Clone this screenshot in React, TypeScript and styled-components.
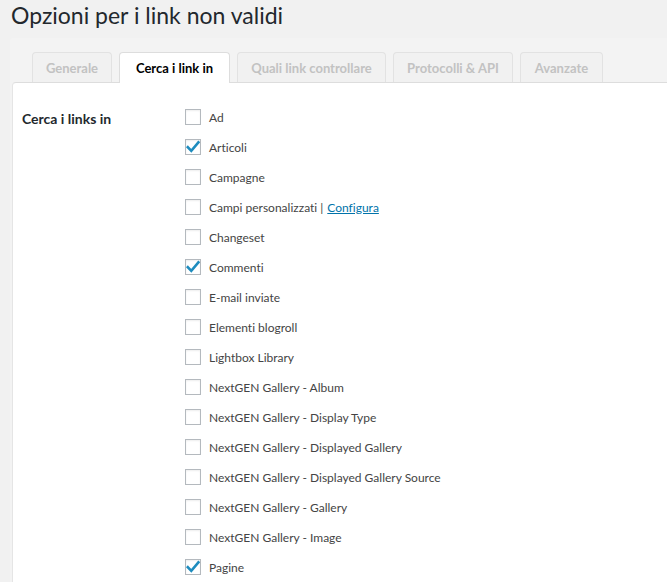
import React from "react";
import styled, { createGlobalStyle } from "styled-components";

const Global = createGlobalStyle`
  html, body { margin: 0; padding: 0; background: #f1f1f1; }
  body {
    font-family: "Lato", "Open Sans", sans-serif;
    color: #444;
    font-size: 13px;
    font-variant-ligatures: none;
  }
  * { box-sizing: border-box; }
`;

const Page = styled.div`
  padding-left: 10px;
  height: 582px;
  overflow: hidden;
`;

const Title = styled.h1`
  margin: 0;
  font-size: 23px;
  line-height: 30px;
  font-weight: 400;
  color: #23282d;
  padding: 0 0 0 1px;
`;

const TabArea = styled.div`
  margin-top: 8px;
  background: #f3f3f3;
  border-radius: 3px 0 0 0;
`;

const TabBar = styled.div`
  display: flex;
  gap: 7px;
  padding: 14px 0 0 22px;
  align-items: flex-end;
`;

const Tab = styled.div<{ $active?: boolean; $w: number }>`
  width: ${(p) => p.$w}px;
  height: ${(p) => (p.$active ? 31 : 30)}px;
  display: flex;
  align-items: center;
  justify-content: center;
  font-size: 13px;
  font-weight: 700;
  border: 1px solid ${(p) => (p.$active ? "#ddd" : "#e2e2e2")};
  border-bottom: none;
  border-radius: 4px 4px 0 0;
  background: ${(p) => (p.$active ? "#fff" : "#f1f1f1")};
  color: ${(p) => (p.$active ? "#000" : "#c2c2c2")};
  margin-bottom: ${(p) => (p.$active ? -1 : 0)}px;
  position: relative;
  z-index: ${(p) => (p.$active ? 1 : 0)};
  white-space: nowrap;
`;

const Panel = styled.div`
  margin-left: 2px;
  background: #fff;
  border-top: 1px solid #ddd;
  border-left: 1px solid #e5e5e5;
  border-radius: 4px 0 0 0;
  padding: 19px 0 20px 9px;
  display: grid;
  grid-template-columns: 163px 1fr;
`;

const Label = styled.div`
  font-size: 14px;
  font-weight: 700;
  color: #23282d;
  line-height: 20px;
  padding-top: 7px;
`;

const List = styled.div`
  display: flex;
  flex-direction: column;
`;

const Row = styled.label`
  height: 30px;
  display: flex;
  align-items: center;
  gap: 8px;
  font-size: 12px;
  color: #444;
  white-space: nowrap;
`;

const Box = styled.span`
  width: 16px;
  height: 16px;
  border: 1px solid #b4b9be;
  background: #fff;
  box-shadow: inset 0 1px 2px rgba(0, 0, 0, 0.07);
  display: flex;
  align-items: center;
  justify-content: center;
  flex: none;
`;

const Link = styled.a`
  color: #0073aa;
  text-decoration: underline;
  margin-left: 4px;
`;

const Check = () => (
  <svg width="14" height="14" viewBox="0 0 14 14">
    <path d="M1.8 7.2 L5.3 10.8 L12.4 2.4" fill="none" stroke="#1e8cbe" strokeWidth="2.6" strokeLinecap="square" strokeLinejoin="miter" />
  </svg>
);

const items: { label: string; checked?: boolean; link?: string }[] = [
  { label: "Ad" },
  { label: "Articoli", checked: true },
  { label: "Campagne" },
  { label: "Campi personalizzati |", link: "Configura" },
  { label: "Changeset" },
  { label: "Commenti", checked: true },
  { label: "E-mail inviate" },
  { label: "Elementi blogroll" },
  { label: "Lightbox Library" },
  { label: "NextGEN Gallery - Album" },
  { label: "NextGEN Gallery - Display Type" },
  { label: "NextGEN Gallery - Displayed Gallery" },
  { label: "NextGEN Gallery - Displayed Gallery Source" },
  { label: "NextGEN Gallery - Gallery" },
  { label: "NextGEN Gallery - Image" },
  { label: "Pagine", checked: true },
];

const tabs: { label: string; w: number }[] = [
  { label: "Generale", w: 80 },
  { label: "Cerca i link in", w: 111 },
  { label: "Quali link controllare", w: 149 },
  { label: "Protocolli & API", w: 120 },
  { label: "Avanzate", w: 83 },
];

export default function App() {
  return (
    <Page>
      <Global />
      <Title>Opzioni per i link non validi</Title>
      <TabArea>
        <TabBar>
          {tabs.map((t, i) => (
            <Tab key={t.label} $w={t.w} $active={i === 1}>{t.label}</Tab>
          ))}
        </TabBar>
        <Panel>
          <Label>Cerca i links in</Label>
          <List>
            {items.map((it) => (
              <Row key={it.label}>
                <Box>{it.checked && <Check />}</Box>
                <span>
                  {it.label}
                  {it.link && <Link href="#">{it.link}</Link>}
                </span>
              </Row>
            ))}
          </List>
        </Panel>
      </TabArea>
    </Page>
  );
}
